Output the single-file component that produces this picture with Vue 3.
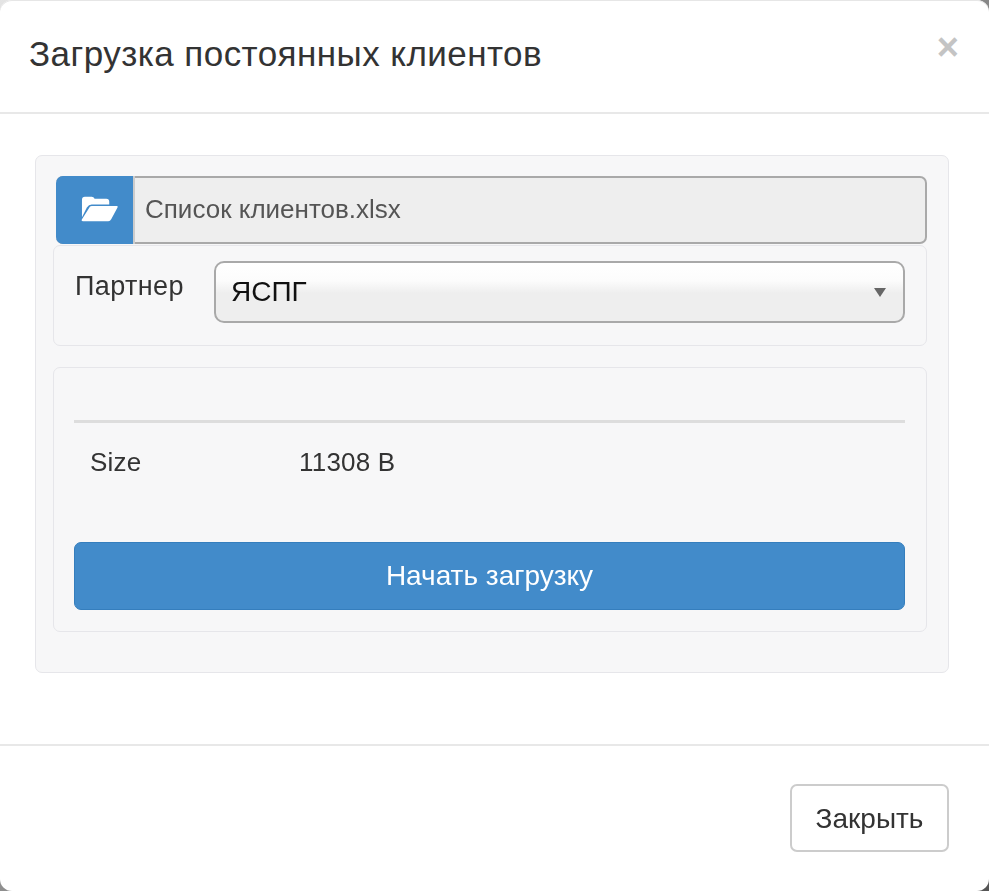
<template>
  <div class="modal-box">
    <header class="modal-header">
      <h4 class="modal-title">Загрузка постоянных клиентов</h4>
      <span class="close-x">×</span>
    </header>
    <div class="modal-body">
      <div class="well">
        <div class="file-row">
          <span class="file-btn">
            <svg class="folder-icon" viewBox="0 2 38 25" width="37" height="26">
              <path fill="#fff" d="M1 23V5q0-3 3-3h7q2 0 3 2h12q3 0 3 3v3H11q-3 0-5 3z" />
              <path fill="#fff" d="M11 11.500h26q1 0 .5 1.500L31 25q-1 2-3 2H2q-2 0-1-2l7-11q1-2.500 3-2.500z" />
            </svg>
          </span>
          <span class="file-name">Список клиентов.xlsx</span>
        </div>
        <div class="panel partner-panel">
          <label class="partner-label">Партнер</label>
          <div class="select">
            <span>ЯСПГ</span>
            <i class="caret" />
          </div>
        </div>
        <div class="panel info-panel">
          <hr class="rule" />
          <div class="info-row">
            <span class="info-key">Size</span>
            <span>{{ size }} B</span>
          </div>
          <button class="start-btn">Начать загрузку</button>
        </div>
      </div>
    </div>
    <footer class="modal-footer">
      <button class="close-btn">Закрыть</button>
    </footer>
  </div>
</template>

<script setup>
const size = 11308
</script>

<style>
html, body { margin: 0; background: linear-gradient(135deg, #e4e4e4, #8a8a8a 50%, #555); }
</style>

<style scoped>
.modal-box {
  box-sizing: border-box;
  width: 989px;
  height: 891px;
  padding-top: 1px;
  background: #fff;
  border-radius: 12px;
  box-shadow: inset 0 1px 0 #e6e6e6;
  font-family: 'Liberation Sans', Arial, sans-serif;
  color: #333;
  display: flex;
  flex-direction: column;
  filter: blur(0.55px);
}

.modal-header {
  height: 113px;
  flex: none;
  border-bottom: 2px solid #e8e8e8;
  display: flex;
  align-items: center;
  justify-content: space-between;
  padding: 0 30px 5px 29px;
  box-sizing: border-box;
}

.modal-title { margin: 0; font-size: 35px; font-weight: 400; letter-spacing: 0.45px; }

.close-x {
  font-size: 38px;
  font-weight: 700;
  line-height: 1;
  color: #c4c4c4;
  margin-top: -15px;
}

.modal-body { flex: none; height: 630px; padding: 41px 40px 0 35px; box-sizing: border-box; }

.well {
  box-sizing: border-box;
  height: 518px;
  padding: 20px 21px 0 17px;
  background: #f7f7f8;
  border: 1px solid #e6e6ea;
  border-radius: 7px;
}

.file-row {
  display: flex;
  height: 68px;
  margin-left: 3px;
  box-sizing: border-box;
  background: #eee;
  border: 2px solid #a9a9a9;
  border-left: none;
  border-radius: 7px;
}

.file-btn {
  width: 79px;
  margin: -2px 0;
  flex: none;
  background: #428bca;
  border-radius: 7px 0 0 7px;
  border-right: 2px solid #ccc;
  box-sizing: border-box;
  display: flex;
  align-items: center;
  justify-content: flex-end;
  padding: 0 15px 3px 0;
}

.file-name { margin: -2px 0 0 10px; align-self: center; font-size: 26px; color: #555; }

.panel {
  box-sizing: border-box;
  background: #f7f7f8;
  border: 1px solid #e6e6ea;
  border-radius: 7px;
}

.partner-panel {
  height: 101px;
  margin-top: 1px;
  padding: 15px 21px 0 20px;
  display: flex;
  gap: 29px;
}

.partner-label { font-size: 27px; letter-spacing: 0.4px; width: 110px; margin-left: 1px; line-height: 50px; flex: none; }

.select {
  flex: 1;
  height: 62px;
  box-sizing: border-box;
  border: 2px solid #a9a9a9;
  border-radius: 10px;
  background: linear-gradient(#fff 0%, #fcfcfc 30%, #eee 52%, #eee 100%);
  display: flex;
  align-items: center;
  justify-content: space-between;
  padding: 0 17px 0 15px;
  font-size: 28px;
  color: #111;
}

.caret {
  width: 0;
  height: 0;
  border: 6px solid transparent;
  border-top: 9px solid #666;
  border-bottom: none;
}

.info-panel { height: 265px; margin-top: 21px; padding: 52px 21px 0 20px; }

.rule { margin: 0; border: none; height: 3px; background: #ddd; }

.info-row {
  display: flex;
  font-size: 26px;
  letter-spacing: 0.2px;
  margin-top: 24px;
  padding-left: 16px;
  line-height: 30px;
}

.info-key { width: 209px; }

.start-btn {
  display: block;
  width: 100%;
  height: 68px;
  margin-top: 65px;
  border: 1px solid #357ebd;
  border-radius: 7px;
  background: #428bca;
  color: #fff;
  font: inherit;
  font-size: 28px;
}

.modal-footer {
  flex: 1;
  border-top: 2px solid #e8e8e8;
  display: flex;
  justify-content: flex-end;
  align-items: flex-start;
  padding: 38px 40px 0 0;
}

.close-btn {
  width: 159px;
  height: 68px;
  padding-top: 3px;
  background: #fff;
  border: 2px solid #ccc;
  border-radius: 7px;
  font: inherit;
  font-size: 28px;
  color: #333;
}
</style>
